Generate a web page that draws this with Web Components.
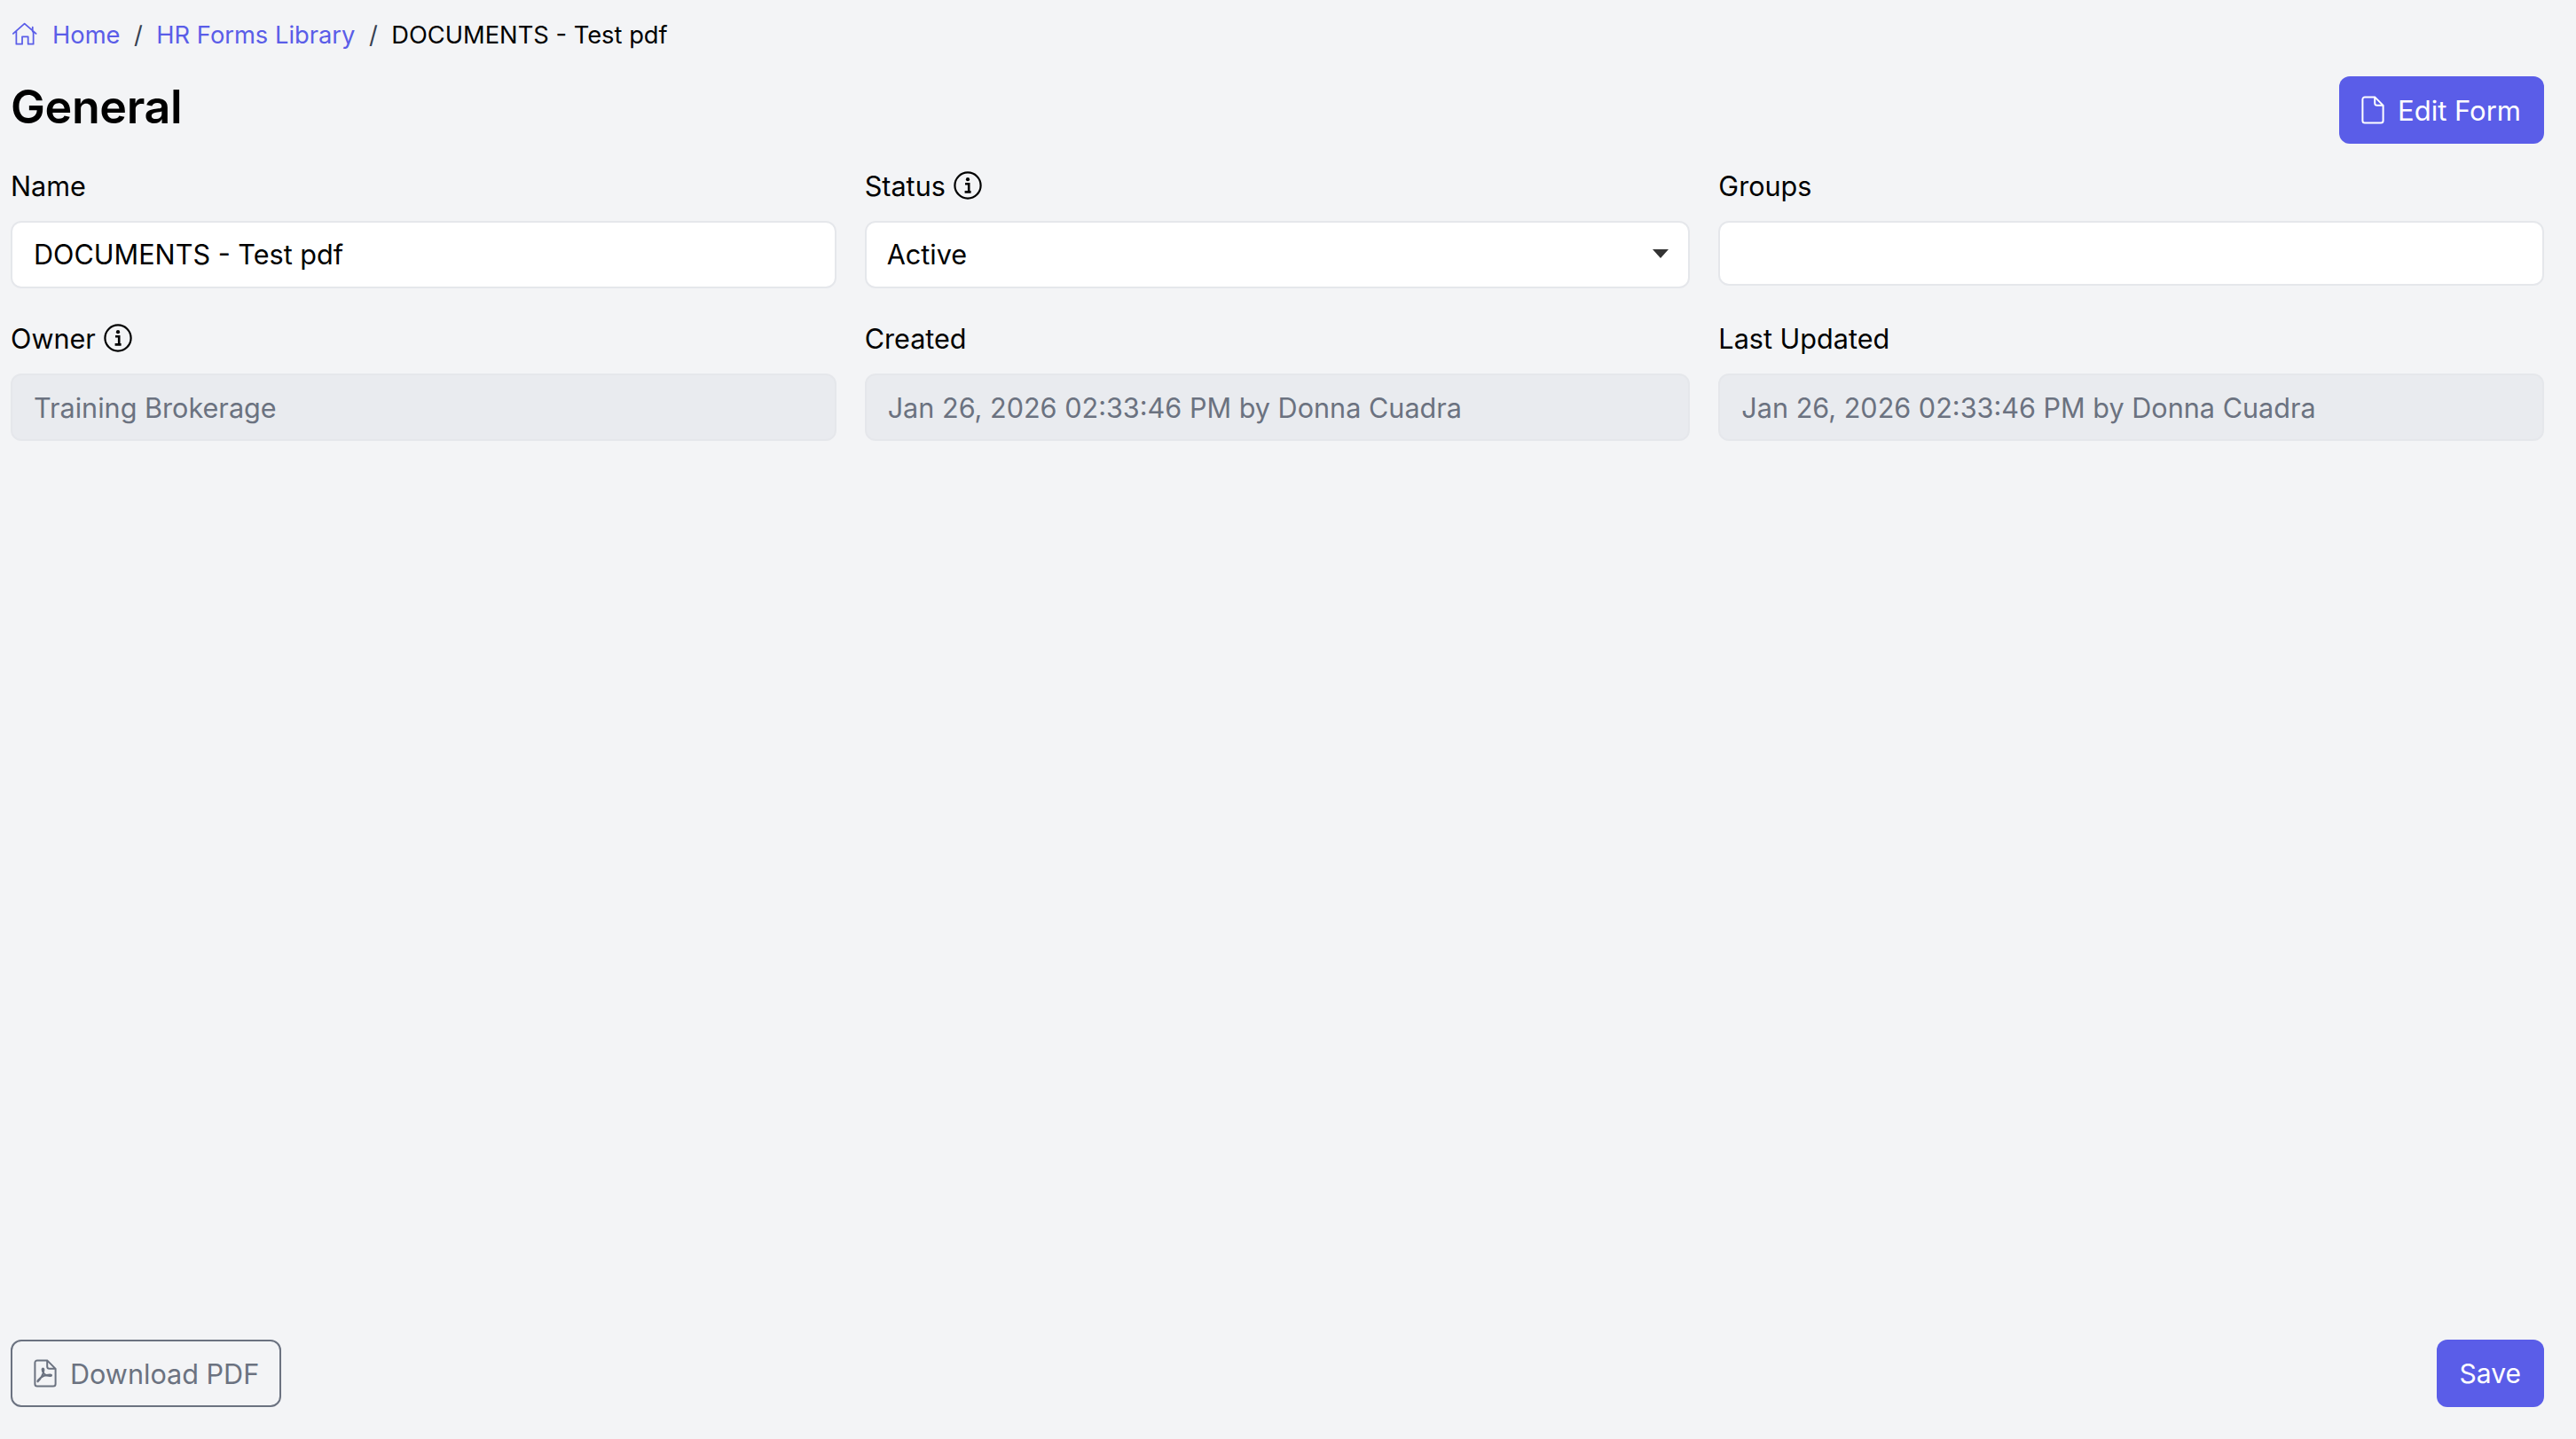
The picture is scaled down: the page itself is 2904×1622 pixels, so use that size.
<!DOCTYPE html>
<html>
<head>
<meta charset="utf-8">
<style>
  html, body { margin: 0; height: 100%; background: #f3f4f6; }
  body { font-family: Inter, "Liberation Sans", sans-serif; }
</style>
</head>
<body>
<form-page>
  <bread-crumbs slot="crumbs" current="DOCUMENTS - Test pdf">
    <a-crumb>Home</a-crumb>
    <a-crumb>HR Forms Library</a-crumb>
  </bread-crumbs>
  <span slot="title">General</span>
  <app-button slot="action" variant="primary" icon="file">Edit Form</app-button>

  <form-field label="Name" value="DOCUMENTS - Test pdf"></form-field>
  <form-field label="Status" info kind="select" value="Active"></form-field>
  <form-field label="Groups" kind="short"></form-field>
  <form-field label="Owner" info kind="disabled" value="Training Brokerage"></form-field>
  <form-field label="Created" kind="disabled" value="Jan 26, 2026 02:33:46 PM by Donna Cuadra"></form-field>
  <form-field label="Last Updated" kind="disabled" value="Jan 26, 2026 02:33:46 PM by Donna Cuadra"></form-field>

  <app-button slot="footer-left" variant="outline" icon="pdf">Download PDF</app-button>
  <app-button slot="footer-right" variant="primary" class="save">Save</app-button>
</form-page>

<script>
// Icons on a 16x16 grid
const SHEET = '<path d="M4 .7h5.600l4.700 4.700V14a1.300 1.300 0 0 1-1.300 1.300H4A1.300 1.300 0 0 1 2.700 14V2A1.300 1.300 0 0 1 4 .7zM9.600.7v3.400a1.300 1.300 0 0 0 1.300 1.300h3.400" fill="none" stroke="currentColor" stroke-width="1"/>';
const ICONS = {
  house: '<path d="M.5 7.400 7.800.9l7.400 6.500M2.500 5.800v8.300h3.800V9.300h3.800v4.800h3.400V5.800M13 3.200V6" fill="none" stroke="currentColor" stroke-width="1" stroke-linecap="round" stroke-linejoin="round"/>',
  info: '<circle cx="8" cy="8" r="7.300" fill="none" stroke="currentColor" stroke-width="1.100"/><circle cx="8" cy="4.600" r="1.050"/><path d="M6.500 7.100h2.100v4.400M6.300 11.700h3.500" fill="none" stroke="currentColor" stroke-width="1.300"/>',
  file: SHEET,
  pdf: SHEET + '<path d="M4.300 12.700C6 11 7.700 8 7.700 6c0-1-.9-1-.9-.1 0 2 2 3.700 4.700 3.600.7 0 .7-.7 0-.7-2.500-.1-5.200 1-7 3-.4.500-.4 1 0 .9" fill="none" stroke="currentColor" stroke-width="1"/>'
};

const icon = (name, size) =>
  `<svg width="${size}" height="${size}" viewBox="0 0 16 16" fill="currentColor" aria-hidden="true">${ICONS[name]}</svg>`;

// Page layout
class FormPage extends HTMLElement {
  constructor() {
    super();
    this.attachShadow({ mode: 'open' }).innerHTML = `
      <style>
        :host { display: flex; flex-direction: column; box-sizing: border-box; height: 100vh; padding: 21px 36px 36px 12px; }
        .head { display: flex; justify-content: space-between; align-items: flex-start; margin-top: 29px; }
        h1 { margin: 1px 0 0; font-size: 52px; line-height: 68px; font-weight: 600; color: #000; letter-spacing: -0.4px; }
        .grid { display: grid; grid-template-columns: repeat(3, 1fr); column-gap: 32px; row-gap: 36px; align-items: start; margin-top: 27px; }
        .foot { margin-top: auto; display: flex; justify-content: space-between; }
      </style>
      <slot name="crumbs"></slot>
      <div class="head">
        <h1><slot name="title"></slot></h1>
        <slot name="action"></slot>
      </div>
      <div class="grid"><slot></slot></div>
      <div class="foot">
        <slot name="footer-left"></slot>
        <slot name="footer-right"></slot>
      </div>`;
  }
}

class BreadCrumbs extends HTMLElement {
  constructor() {
    super();
    this.attachShadow({ mode: 'open' }).innerHTML = `
      <style>
        :host { display: flex; align-items: center; height: 36px; font-size: 27.300px; color: #000; }
        svg { color: #5a5de8; margin: 0 17px 0 2px; }
      </style>
      ${icon('house', 28)}
      <slot></slot>
      <span class="cur"></span>`;
  }
  connectedCallback() {
    this.shadowRoot.querySelector('.cur').textContent = this.getAttribute('current');
  }
}

class ACrumb extends HTMLElement {
  constructor() {
    super();
    this.attachShadow({ mode: 'open' }).innerHTML = `
      <style>
        :host { display: inline-flex; color: #5a5de8; }
        .sep { margin: 0 15.500px; color: #374151; }
      </style>
      <slot></slot><span class="sep">/</span>`;
  }
}

class AppButton extends HTMLElement {
  constructor() {
    super();
    this.attachShadow({ mode: 'open' });
  }
  connectedCallback() {
    const name = this.getAttribute('icon');
    this.shadowRoot.innerHTML = `
      <style>
        :host { display: inline-flex; box-sizing: border-box; height: 76px; align-items: center; gap: 13px; padding: 0 26px; border-radius: 12px; font-size: 31px; white-space: nowrap; }
        :host([icon]) { padding-left: 21px; }
        :host(.save) { font-size: 30px; }
        :host([variant=primary]) { background: #5a5de8; color: #fff; }
        :host([variant=outline]) { border: 2px solid #6b7280; color: #6b7280; padding: 0 23px 0 20px; font-size: 30.600px; }
      </style>
      ${name ? icon(name, 32) : ''}<slot></slot>`;
  }
}

class FormField extends HTMLElement {
  constructor() {
    super();
    this.attachShadow({ mode: 'open' });
  }
  connectedCallback() {
    const kind = this.getAttribute('kind') || 'text';
    const value = this.getAttribute('value') || '';
    this.shadowRoot.innerHTML = `
      <style>
        :host { display: block; min-width: 0; font-size: 30.600px; }
        .label { display: flex; align-items: center; gap: 8px; height: 40px; margin-bottom: 20px; color: #000; }
        .label span { margin-right: 1px; }
        .box { box-sizing: border-box; height: 76px; display: flex; align-items: center; justify-content: space-between; padding: 0 24px 1px; border: 2px solid #e5e7eb; border-radius: 12px; background: #fff; color: #000; }
        .select { padding-left: 23px; padding-right: 22px; padding-bottom: 2px; }
        .short { height: 73px; }
        .disabled { background: #e9ebef; color: #6b7280; padding-bottom: 0; }
        .caret { width: 0; height: 0; border: 9px solid transparent; border-top: 10px solid #333; border-bottom: 0; }
      </style>
      <div class="label"><span>${this.getAttribute('label')}</span>${this.hasAttribute('info') ? icon('info', 32) : ''}</div>
      <div class="box ${kind}"><span>${value}</span>${kind === 'select' ? '<span class="caret"></span>' : ''}</div>`;
  }
}

customElements.define('form-page', FormPage);
customElements.define('bread-crumbs', BreadCrumbs);
customElements.define('a-crumb', ACrumb);
customElements.define('app-button', AppButton);
customElements.define('form-field', FormField);
</script>
</body>
</html>
